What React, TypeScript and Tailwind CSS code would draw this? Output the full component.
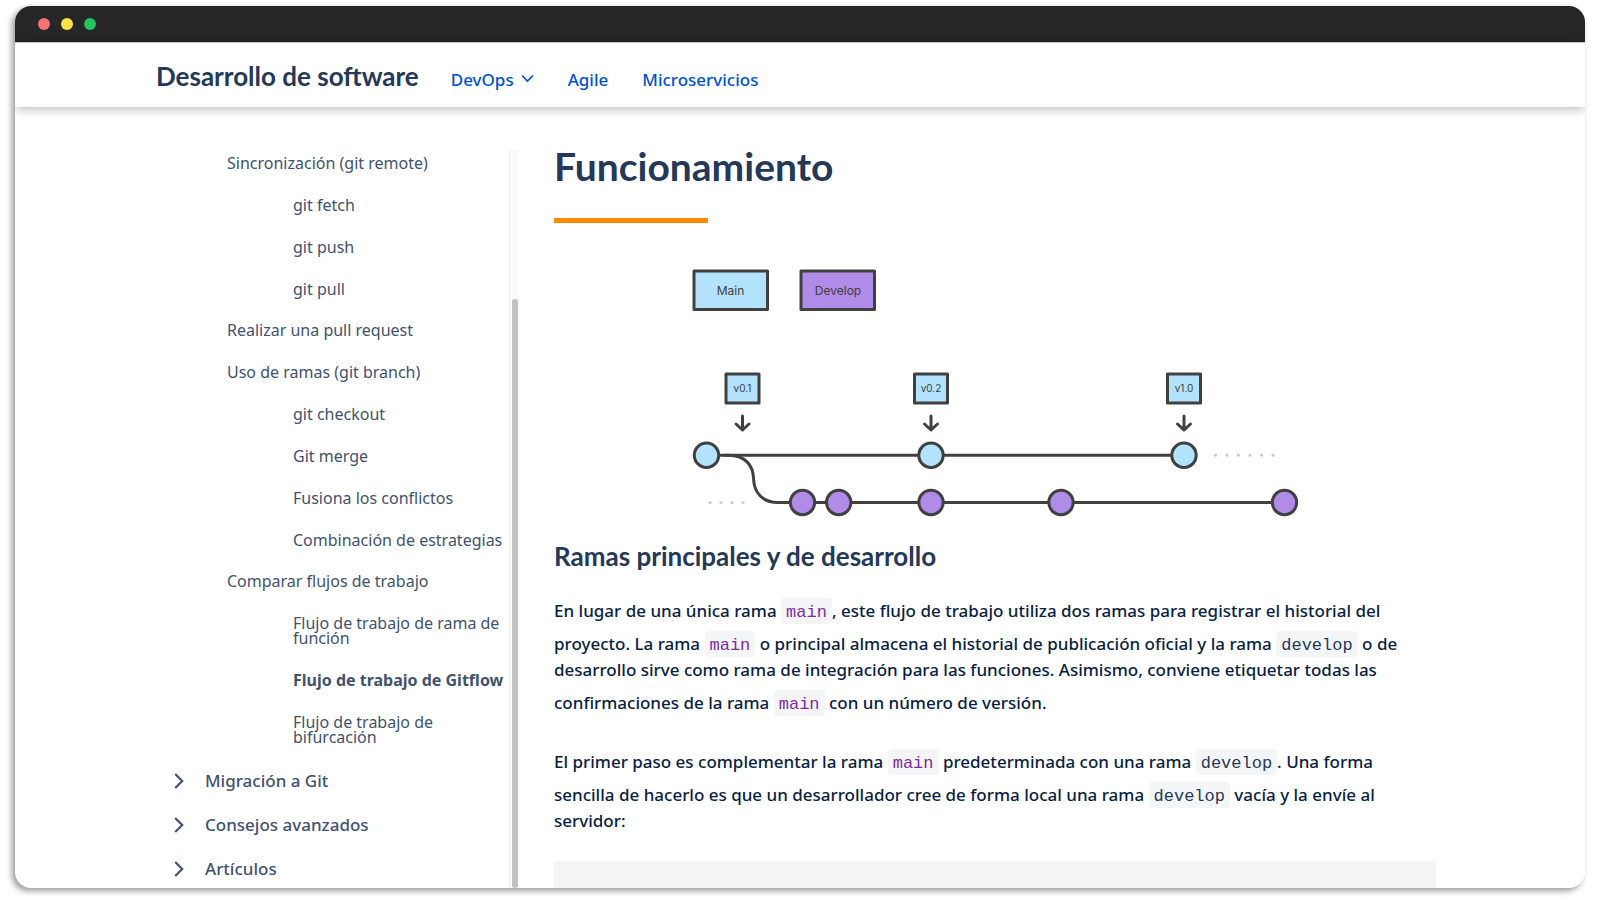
import type { ReactNode } from 'react';

type Topic = { label: string; children?: string[] };

const topics: Topic[] = [
  { label: 'Sincronización (git remote)', children: ['git fetch', 'git push', 'git pull'] },
  { label: 'Realizar una pull request' },
  {
    label: 'Uso de ramas (git branch)',
    children: ['git checkout', 'Git merge', 'Fusiona los conflictos', 'Combinación de estrategias'],
  },
  {
    label: 'Comparar flujos de trabajo',
    children: [
      'Flujo de trabajo de rama de función',
      'Flujo de trabajo de Gitflow',
      'Flujo de trabajo de bifurcación',
    ],
  },
];

const sections = ['Migración a Git', 'Consejos avanzados', 'Artículos'];
const current = 'Flujo de trabajo de Gitflow';

function TitleBar() {
  return (
    <div className="flex h-9 shrink-0 items-center gap-[11px] bg-[#262626] pl-[23px]">
      <span className="size-3 rounded-full bg-[#f87171]" />
      <span className="size-3 rounded-full bg-[#fde047]" />
      <span className="size-3 rounded-full bg-[#22c55e]" />
    </div>
  );
}

function Header() {
  return (
    <header className="relative z-10 flex h-[65px] shrink-0 items-baseline gap-8 border-t border-[#c4c4c4] bg-white pt-[17px] pl-[141px] shadow-[0_2px_10px_rgba(0,0,0,0.28)]">
      <a href="#inicio" className="font-['Lato',sans-serif] text-[26px] leading-8 font-bold text-[#253858]">
        Desarrollo de software
      </a>
      <nav className="flex items-baseline gap-[34px] text-[17px] leading-6 font-medium text-[#0052cc]">
        <button type="button" className="flex items-center gap-[7px] font-medium">
          DevOps
          <svg className="mb-1" width="13" height="9" viewBox="0 0 13 9" fill="none" stroke="currentColor" strokeWidth="1.7" aria-hidden="true">
            <path d="M1 1.5 6.5 7 12 1.5" />
          </svg>
        </button>
        <a href="#agile">Agile</a>
        <a href="#microservicios">Microservicios</a>
      </nav>
    </header>
  );
}

function Sidebar() {
  return (
    <aside className="flex w-[362px] shrink-0 pt-[43px] text-[#42526e]">
      <nav className="min-w-0 flex-1 overflow-hidden pt-1.5" aria-label="Tutoriales">
        <ul className="flex flex-col gap-[27px] pl-[70px] text-base leading-[15px]">
          {topics.map((topic) => (
            <li key={topic.label}>
              <a href="#tema">{topic.label}</a>
              {topic.children && (
                <ul className="mt-[27px] -mb-px flex flex-col gap-[27px] pl-[66px]">
                  {topic.children.map((child) => (
                    <li key={child} className={child === current ? 'font-bold' : ''}>
                      <a href="#subtema" aria-current={child === current ? 'page' : undefined}>
                        {child}
                      </a>
                    </li>
                  ))}
                </ul>
              )}
            </li>
          ))}
        </ul>
        <ul className="mt-[29px] flex flex-col gap-7 pl-[17px] text-[17px] leading-4 font-medium">
          {sections.map((section) => (
            <li key={section}>
              <button type="button" className="flex items-center gap-[21px] font-medium">
                <svg width="10" height="16" viewBox="0 0 10 16" fill="none" stroke="currentColor" strokeWidth="2.2" aria-hidden="true">
                  <path d="M1.2 1 8.2 8 1.2 15" />
                </svg>
                {section}
              </button>
            </li>
          ))}
        </ul>
      </nav>
      <div className="w-[10px] border-l border-[#efefef] bg-[#fafafa] px-0.5 pt-[149px]">
        <div className="h-full w-1.5 rounded-full bg-[#c1c1c1]" />
      </div>
    </aside>
  );
}

const versions = [
  { label: 'v0.1', x: 742.5 },
  { label: 'v0.2', x: 931 },
  { label: 'v1.0', x: 1184 },
];

function BranchDiagram() {
  return (
    <svg
      className="mt-[37px] h-[260px] w-full font-normal"
      viewBox="554 260 882 260"
      fill="none"
      stroke="#404040"
      strokeWidth="3"
      role="img"
      aria-label="Ramas main y develop"
    >
      <rect x="694" y="271" width="73.5" height="38.5" fill="#b3e3ff" strokeLinejoin="round" />
      <rect x="801" y="271" width="73.5" height="38.5" fill="#b08be8" strokeLinejoin="round" />
      <path d="M706 455.2H1184" />
      <path d="M724 455.2h4C745 455.2 753.3 465 753.6 479C754 493 763 502.5 778 502.5H1284" />
      {versions.map((v) => (
        <g key={v.label}>
          <rect x={v.x - 16.5} y="374" width="33" height="29" fill="#b3e3ff" strokeLinejoin="round" />
          <path
            d={`M${v.x} 416v14M${v.x - 6.5} 424l6.5 6 6.5-6`}
            strokeLinecap="round"
            strokeLinejoin="round"
          />
        </g>
      ))}
      {[706.5, 931, 1184].map((x) => (
        <circle key={x} cx={x} cy="455.2" r="12.2" fill="#b3e3ff" />
      ))}
      {[802.5, 838.7, 931, 1061, 1284.5].map((x) => (
        <circle key={x} cx={x} cy="502.5" r="12.2" fill="#b08be8" />
      ))}
      <g fill="#cccccc" stroke="none">
        {[710, 721, 732, 743].map((x) => (
          <circle key={x} cx={x} cy="502.5" r="1.6" />
        ))}
        {[1215.5, 1227, 1238.5, 1250, 1261.5, 1273].map((x) => (
          <circle key={x} cx={x} cy="455.2" r="1.6" />
        ))}
      </g>
      <g fill="#404040" stroke="none" textAnchor="middle" className="font-['Inter',sans-serif]">
        <text x="730.5" y="295" fontSize="12">Main</text>
        <text x="838" y="295" fontSize="12">Develop</text>
        {versions.map((v) => (
          <text key={v.label} x={v.x} y="392" fontSize="10">
            {v.label}
          </text>
        ))}
      </g>
    </svg>
  );
}

function Code({ children, accent }: { children: ReactNode; accent?: boolean }) {
  return (
    <code
      className={`mt-[7px] inline-block rounded bg-[#f4f5f7] px-[5px] pt-1 font-['Liberation_Mono',monospace] text-[17px] leading-[22px] font-normal ${
        accent ? 'text-[#7e2ba5]' : 'text-[#253858]'
      }`}
    >
      {children}
    </code>
  );
}

function Article() {
  return (
    <main className="flex min-w-0 flex-1 flex-col overflow-hidden pt-[39px] text-[17px] leading-[26px] font-medium text-[#091e42]">
      <h1 className="font-['Lato',sans-serif] text-[39px] leading-10 font-bold text-[#253858]">Funcionamiento</h1>
      <div className="mt-8 h-[5px] w-[154px] shrink-0 bg-[#ff8b00]" />
      <BranchDiagram />
      <h2 className="mt-5 font-['Lato',sans-serif] text-[26px] leading-8 font-bold text-[#253858]">
        Ramas principales y de desarrollo
      </h2>
      <p className="mt-[19px]">
        En lugar de una única rama <Code accent>main</Code>, este flujo de trabajo utiliza dos ramas para registrar el
        historial del proyecto. La rama <Code accent>main</Code> o principal almacena el historial de publicación
        oficial y la rama <Code>develop</Code> o de desarrollo sirve como rama de integración para las funciones.
        Asimismo, conviene etiquetar todas las confirmaciones de la rama <Code accent>main</Code> con un número de
        versión.
      </p>
      <p className="mt-[26px]">
        El primer paso es complementar la rama <Code accent>main</Code> predeterminada con una rama{' '}
        <Code>develop</Code>. Una forma sencilla de hacerlo es que un desarrollador cree de forma local una rama{' '}
        <Code>develop</Code> vacía y la envíe al servidor:
      </p>
      <div className="mt-[27px] flex-1 bg-[#f4f5f7]" />
    </main>
  );
}

export default function App() {
  return (
    <div className="h-screen overflow-hidden bg-white px-[15px] pt-1.5 pb-3 font-['Noto_Sans',sans-serif]">
      <div className="flex h-full flex-col overflow-hidden rounded-2xl bg-white shadow-[-3px_3px_6px_rgba(0,0,0,0.4)]">
        <TitleBar />
        <Header />
        <div className="flex min-h-0 flex-1 gap-[35px] pr-[149px] pl-[142px]">
          <Sidebar />
          <Article />
        </div>
      </div>
    </div>
  );
}
